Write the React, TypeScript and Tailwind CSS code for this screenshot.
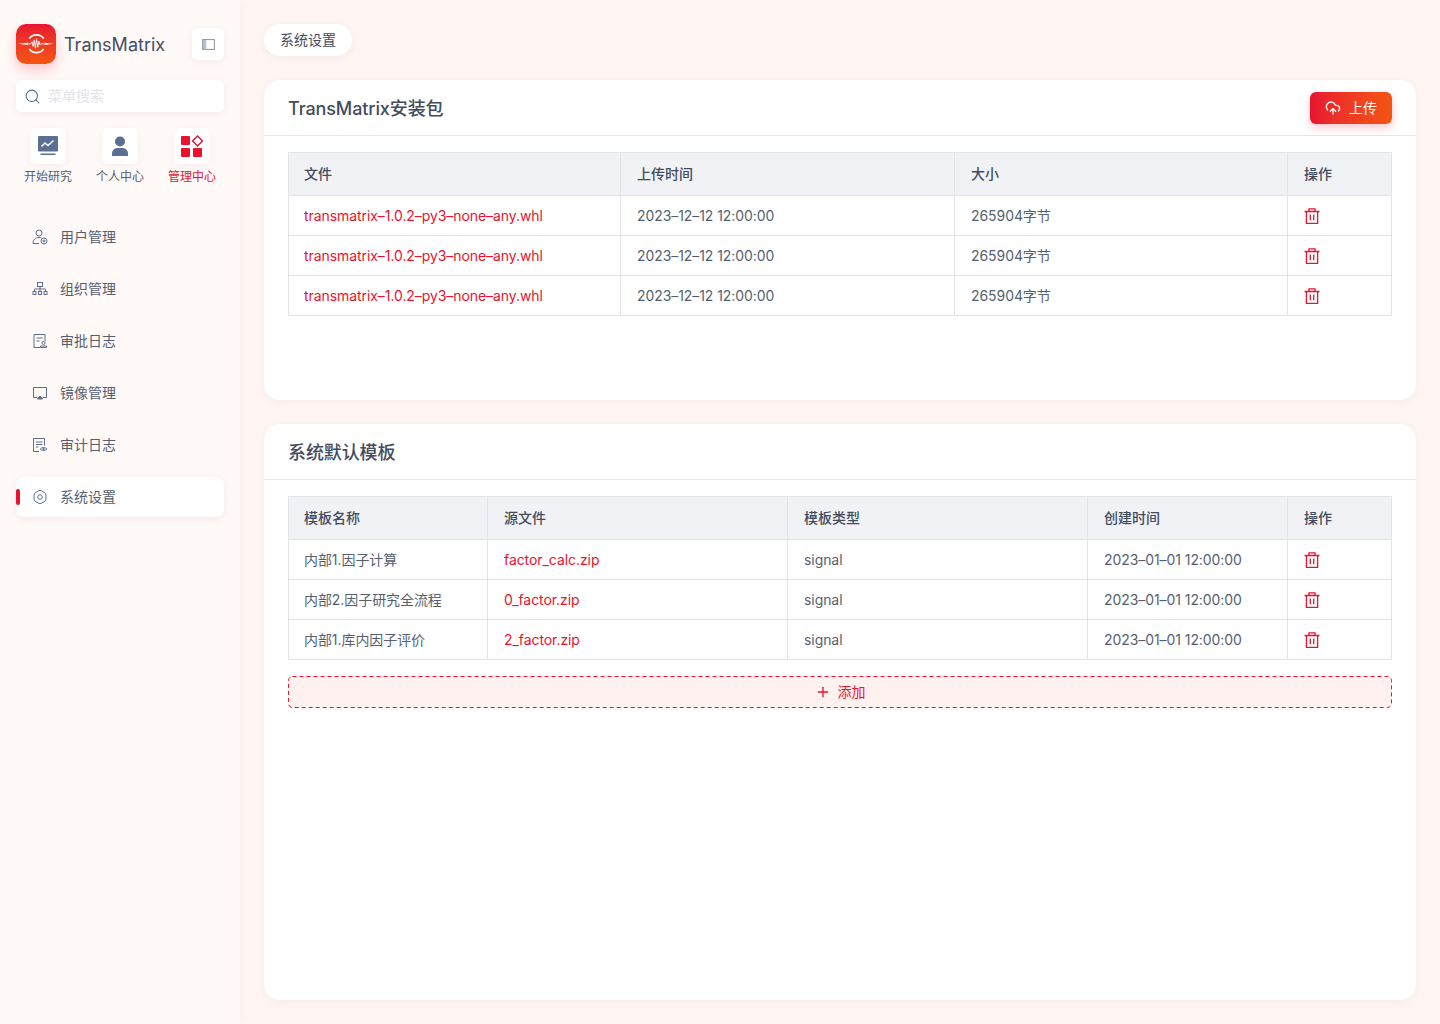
import { ReactNode } from "react";
import { Search, CloudUpload, Plus } from "lucide-react";

const FONT = "font-['Inter','Noto_Sans_CJK_SC',sans-serif]";

const Trash = () => (
  <svg width="16" height="16" viewBox="0 0 16 16" fill="none" stroke="#e8132f" strokeWidth="1.3">
    <path d="M.5 3.500h15M5 3.500V.9h6v2.600M2.400 3.500v11.800h11.200V3.500M6.300 6.500v5.800M9.700 6.500v5.800" />
  </svg>
);

const PanelIcon = () => (
  <svg width="13" height="11" viewBox="0 0 14 12">
    <rect x=".6" y=".6" width="12.800" height="10.800" fill="none" stroke="#8e9ab3" strokeWidth="1.200" />
    <rect x="1" y="1" width="3.500" height="10" fill="#b5bdcd" />
  </svg>
);

const Logo = () => (
  <svg width="40" height="40" viewBox="0 0 40 40" fill="none">
    <path d="M2 19.800 L12 18.700 L12 20.900z M37.500 19.800 L28.500 18.700 L28.500 20.900z" fill="#fff" />
    <path d="M13.300 14.500 A9 9 0 0 1 27.700 14.500 M13.300 25.100 A9 9 0 0 0 27.700 25.100" stroke="#fff" strokeWidth="1.700" />
    <path d="M12 19.800h3l1-2 1.100 4.500 1.100-6.500 1.200 8.500 1.200-9.500 1.200 8.500 1.100-6 1 3.500 .9-1h3.100" stroke="#fff" strokeWidth=".9" strokeLinejoin="round" />
  </svg>
);

const ChartIcon = () => (
  <svg width="20" height="20" viewBox="0 0 20 20" fill="none">
    <rect x="0" y="0" width="20" height="15.500" rx="1.200" fill="#5b6f93" />
    <rect x="2.500" y="17.500" width="15" height="1.500" fill="#5b6f93" />
    <path d="M3.500 10.500 L7 7 L10 9.500 L15.500 4.500" stroke="#fff" strokeWidth="1.500" />
  </svg>
);

const PersonIcon = () => (
  <svg width="20" height="20" viewBox="0 0 20 20" fill="#5b6f93">
    <circle cx="10" cy="5.500" r="5" />
    <path d="M2 20v-2.500C2 14 5 12 8 12h4c3 0 6 2 6 5.500V20z" />
  </svg>
);

const GridIcon = () => (
  <svg width="24" height="24" viewBox="0 0 24 24" fill="#e8132f">
    <rect x="1" y="2" width="9" height="9" rx="1" />
    <rect x="1" y="14" width="9" height="9" rx="1" />
    <rect x="13" y="14" width="9" height="9" rx="1" />
    <rect x="14" y="3.500" width="7" height="7" transform="rotate(45 17.500 7)" fill="none" stroke="#e8132f" strokeWidth="1.400" />
  </svg>
);

const stroke = { fill: "none", stroke: "#5b6f93", strokeWidth: 1 };

const menuIcons: ReactNode[] = [
  <g {...stroke}>
    <circle cx="7" cy="4" r="3" />
    <path d="M1 14.500c0-4 2.500-6 6-6 1 0 2 .2 2.500.5M1 14.500h6" />
    <circle cx="12" cy="12" r="3" />
    <circle cx="12" cy="12" r="1" />
  </g>,
  <g {...stroke}>
    <rect x="5.500" y="1.500" width="5" height="4" />
    <path d="M8 5.500V8M2.500 10.500V8h11v2.500M8 8v2.500" />
    <rect x="1" y="10.500" width="3" height="3" />
    <rect x="6.500" y="10.500" width="3" height="3" />
    <rect x="12" y="10.500" width="3" height="3" />
  </g>,
  <g {...stroke}>
    <path d="M8 14.500H2V1.500h11v7" />
    <path d="M4.500 5h6M4.500 8h3" />
    <circle cx="11.500" cy="10" r="1.500" />
    <path d="M8.500 14.500h6v-1.500h-6z" />
  </g>,
  <g {...stroke}>
    <path d="M5 12.500H1.500v-10h13v10H11" />
    <path d="M5.500 14h5L8 11z" fill="#5b6f93" />
  </g>,
  <g {...stroke}>
    <path d="M7 14.500H1.500v-13h11v7" />
    <path d="M4 5h6.500M4 7.500h6.500M4 10h2.500" />
    <path d="M8 12c1.500-2 5-2 7 0-2 2-5.500 2-7 0z" />
    <circle cx="11.500" cy="12" r=".8" fill="#5b6f93" />
  </g>,
  <g {...stroke}>
    <path d="M6.700 1.700a2.500 2.500 0 0 1 2.600 0l3.300 1.900a2.500 2.500 0 0 1 1.300 2.200v4.400a2.500 2.500 0 0 1-1.300 2.200l-3.300 1.900a2.500 2.500 0 0 1-2.600 0l-3.300-1.900a2.500 2.500 0 0 1-1.300-2.200V5.800a2.500 2.500 0 0 1 1.300-2.200z" />
    <circle cx="8" cy="8" r="2.300" />
  </g>,
];

const menus = ["用户管理", "组织管理", "审批日志", "镜像管理", "审计日志", "系统设置"];

const shortcuts = [
  { label: "开始研究", icon: <ChartIcon /> },
  { label: "个人中心", icon: <PersonIcon /> },
  { label: "管理中心", icon: <GridIcon />, active: true },
];

const packages = Array(3).fill({
  name: "transmatrix–1.0.2–py3–none–any.whl",
  time: "2023–12–12 12:00:00",
  size: "265904字节",
});

const templates = [
  { name: "内部1.因子计算", file: "factor_calc.zip" },
  { name: "内部2.因子研究全流程", file: "0_factor.zip" },
  { name: "内部1.库内因子评价", file: "2_factor.zip" },
];

const th = "h-[43px] border border-[#e2e4e9] bg-[#f1f2f6] px-4 first:pl-[15px] text-left text-sm font-medium text-[#434c5e]";
const td = "h-10 border border-[#e2e4e9] px-4 first:pl-[15px] text-sm font-normal tracking-[-0.07px] text-[#565f70]";
const link = "h-10 border border-[#e2e4e9] px-4 first:pl-[15px] text-sm font-normal tracking-[-0.07px] text-[#e8132f]";

function Sidebar() {
  return (
    <aside className="w-[240px] shrink-0 bg-[#fff9f8] px-4 pt-6 shadow-[2px_0_8px_rgba(120,60,60,0.03)]">
      <div className="flex h-10 items-center">
        <div className="flex h-10 w-10 items-center justify-center rounded-[10px] bg-gradient-to-b from-[#e8132f] to-[#f4540e] shadow-[0_6px_12px_rgba(232,19,47,0.22)]">
          <Logo />
        </div>
        <span className="ml-2 pt-px text-lg leading-none text-[#434f66]">TransMatrix</span>
        <button className="ml-auto flex h-8 w-8 items-center justify-center rounded-md bg-white shadow-[0_2px_8px_rgba(90,60,60,0.08)]">
          <PanelIcon />
        </button>
      </div>
      <div className="mt-4 flex h-8 items-center rounded-md bg-white pl-2 shadow-[0_2px_8px_rgba(90,60,60,0.08)]">
        <Search size={17} strokeWidth={1.500} color="#5b6f93" />
        <span className="ml-[7px] text-sm text-[#dfe3ea]">菜单搜索</span>
      </div>
      <div className="mt-4 flex justify-between px-2">
        {shortcuts.map((s) => (
          <div key={s.label} className="flex w-12 flex-col items-center">
            <div className="flex h-9 w-9 items-center justify-center rounded-md bg-white shadow-[0_2px_8px_rgba(90,60,60,0.06)]">
              {s.icon}
            </div>
            <span className={`mt-[5px] whitespace-nowrap text-xs leading-4 ${s.active ? "text-[#e8132f]" : "text-[#565f70]"}`}>
              {s.label}
            </span>
          </div>
        ))}
      </div>
      <nav className="mt-8 flex flex-col gap-3">
        {menus.map((m, i) => {
          const active = i === menus.length - 1;
          return (
            <div
              key={m}
              className={`relative flex h-10 items-center rounded-lg pl-4 text-sm text-[#565f70] ${active ? "bg-white shadow-[0_2px_8px_rgba(90,60,60,0.08)]" : ""}`}
            >
              {active && <span className="absolute left-0 top-3 h-4 w-1 rounded-sm bg-[#e8132f]" />}
              <svg width="16" height="16" viewBox="0 0 16 16">{menuIcons[i]}</svg>
              <span className="ml-3">{m}</span>
            </div>
          );
        })}
      </nav>
    </aside>
  );
}

function Card({ title, action, className, children }: { title: string; action?: ReactNode; className: string; children: ReactNode }) {
  return (
    <section className={`rounded-2xl bg-white shadow-[0_2px_8px_rgba(120,60,60,0.05)] ${className}`}>
      <header className="flex h-14 items-center justify-between border-b border-[#e6e7ec] px-6">
        <h2 className="pt-0.5 text-lg font-medium tracking-[-0.1px] text-[#434c5e]">{title}</h2>
        {action}
      </header>
      <div className="px-6 pt-4">{children}</div>
    </section>
  );
}

export default function App() {
  return (
    <div className={`flex h-[1024px] w-[1440px] overflow-hidden bg-[#fff5f2] ${FONT}`}>
      <Sidebar />
      <main className="flex min-w-0 flex-1 flex-col px-6 pt-6">
        <div className="flex h-8 w-[88px] items-center justify-center rounded-full bg-white text-sm text-[#434c5e] shadow-[0_2px_8px_rgba(120,60,60,0.06)]">
          系统设置
        </div>
        <Card
          title="TransMatrix安装包"
          className="mt-6 h-[320px]"
          action={
            <button className="flex h-8 w-[82px] items-center justify-center gap-2 rounded-md bg-gradient-to-r from-[#e8132f] to-[#f4540e] text-sm text-white shadow-[0_4px_10px_rgba(232,19,47,0.22)]">
              <CloudUpload size={16} strokeWidth={2} />
              上传
            </button>
          }
        >
          <table className="w-full table-fixed border-collapse">
            <colgroup>
              <col className="w-[332px]" />
              <col className="w-[334px]" />
              <col className="w-[333px]" />
              <col />
            </colgroup>
            <thead>
              <tr>
                <th className={th}>文件</th>
                <th className={th}>上传时间</th>
                <th className={th}>大小</th>
                <th className={th}>操作</th>
              </tr>
            </thead>
            <tbody>
              {packages.map((p, i) => (
                <tr key={i}>
                  <td className={link}>{p.name}</td>
                  <td className={td}>{p.time}</td>
                  <td className={td}>{p.size}</td>
                  <td className={td}><Trash /></td>
                </tr>
              ))}
            </tbody>
          </table>
        </Card>
        <Card title="系统默认模板" className="mt-6 h-[576px]">
          <table className="w-full table-fixed border-collapse">
            <colgroup>
              <col className="w-[199px]" />
              <col className="w-[300px]" />
              <col className="w-[300px]" />
              <col className="w-[200px]" />
              <col />
            </colgroup>
            <thead>
              <tr>
                <th className={th}>模板名称</th>
                <th className={th}>源文件</th>
                <th className={th}>模板类型</th>
                <th className={th}>创建时间</th>
                <th className={th}>操作</th>
              </tr>
            </thead>
            <tbody>
              {templates.map((t) => (
                <tr key={t.file}>
                  <td className={td}>{t.name}</td>
                  <td className={link}>{t.file}</td>
                  <td className={td}>signal</td>
                  <td className={td}>2023–01–01 12:00:00</td>
                  <td className={td}><Trash /></td>
                </tr>
              ))}
            </tbody>
          </table>
          <button className="relative mt-4 flex h-8 w-full items-center justify-center gap-[7px] rounded-md bg-[#fff1f0] text-sm text-[#e8132f]">
            <svg className="absolute inset-0 h-8 w-[1104px]" viewBox="0 0 1104 32" fill="none">
              <rect x=".5" y=".5" width="1103" height="31" rx="4" stroke="#e8132f" strokeDasharray="4 3" />
            </svg>
            <Plus size={16} strokeWidth={2} />
            添加
          </button>
        </Card>
      </main>
    </div>
  );
}
